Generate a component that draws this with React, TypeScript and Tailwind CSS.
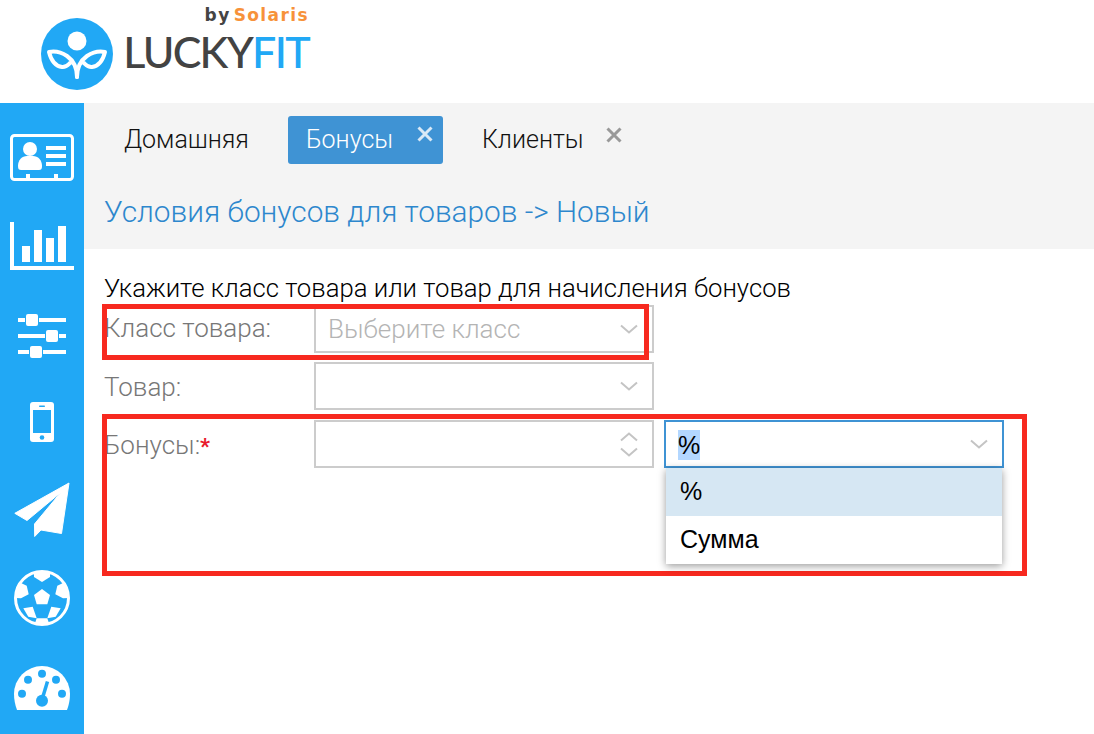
import type { ReactNode } from "react"

function Chevron({ up = false }: { up?: boolean }) {
  return (
    <svg width="18" height="10" viewBox="0 0 18 10" fill="none" className={up ? "rotate-180" : ""}>
      <path d="M1 1.5 9 8.5 17 1.5" stroke="#c4c4c4" strokeWidth="2" />
    </svg>
  )
}

function Close({ color }: { color: string }) {
  return (
    <svg width="16" height="16" viewBox="0 0 16 16" fill="none">
      <path d="M1.5 1.5 14.5 14.5M14.5 1.5 1.5 14.5" stroke={color} strokeWidth="3" />
    </svg>
  )
}

function Logo() {
  return (
    <svg width="72" height="72" viewBox="0 0 72 72" className="shrink-0">
      <circle cx="36" cy="36" r="36" fill="#21a8f5" />
      <circle cx="36" cy="23" r="9.500" fill="#fff" />
      <g fill="none" stroke="#fff" strokeWidth="4" strokeLinecap="round" strokeLinejoin="round">
        <path d="M36 59C36 50 33 43 26 38C20 34 13 33 8 34C10 42 14 48 21 49C25 49.500 27 47 29 45" />
        <path d="M36 59C36 50 39 43 46 38C52 34 59 33 64 34C62 42 58 48 51 49C47 49.500 45 47 43 45" />
      </g>
    </svg>
  )
}

function CardIcon() {
  return (
    <svg width="64" height="47" viewBox="0 0 64 47" fill="#fff">
      <rect x="1.500" y="1.500" width="61" height="44" rx="3" fill="none" stroke="#fff" strokeWidth="3" />
      <circle cx="20" cy="15" r="7" />
      <path d="M8 32C8 26 12 22 17 22H23C28 22 32 26 32 32C32 35 31 36 29 36H11C9 36 8 35 8 32Z" />
      <rect x="36" y="12" width="20" height="4" />
      <rect x="36" y="20" width="20" height="4" />
      <rect x="36" y="28" width="20" height="4" />
      <rect x="16" y="40" width="4" height="5" />
      <rect x="44" y="40" width="4" height="5" />
    </svg>
  )
}

function ChartIcon() {
  return (
    <svg width="64" height="48" viewBox="0 0 64 48" fill="#fff">
      <rect x="0" y="0" width="4" height="48" />
      <rect x="0" y="44" width="64" height="4" />
      <rect x="12" y="24" width="8" height="16" />
      <rect x="24" y="8" width="8" height="32" />
      <rect x="36" y="16" width="8" height="24" />
      <rect x="48" y="4" width="8" height="36" />
    </svg>
  )
}

function SlidersIcon() {
  return (
    <svg width="48" height="44" viewBox="0 0 48 44" fill="#fff">
      <rect x="0" y="4" width="7" height="4" />
      <rect x="21" y="4" width="27" height="4" />
      <rect x="8" y="0" width="12" height="12" rx="2" />
      <rect x="0" y="20" width="27" height="4" />
      <rect x="41" y="20" width="7" height="4" />
      <rect x="28" y="16" width="12" height="12" rx="2" />
      <rect x="0" y="36" width="11" height="4" />
      <rect x="25" y="36" width="23" height="4" />
      <rect x="12" y="32" width="12" height="12" rx="2" />
    </svg>
  )
}

function PhoneIcon() {
  return (
    <svg width="24" height="40" viewBox="0 0 24 40">
      <rect width="24" height="40" rx="3" fill="#fff" />
      <rect x="3" y="8" width="18" height="23" fill="#21a8f5" />
      <rect x="9" y="3.500" width="6" height="1.500" rx="0.700" fill="#21a8f5" />
      <circle cx="12" cy="35.500" r="2.300" fill="#21a8f5" />
    </svg>
  )
}

function PlaneIcon() {
  return (
    <svg width="56" height="56" viewBox="0 0 56 56" fill="#fff" stroke="#fff" strokeWidth="1" strokeLinejoin="round">
      <path d="M55 1 .8 31.300 13 38.500 46.500 10.700 20.500 42 20.700 54.500 27 48 47.500 51.500Z" />
    </svg>
  )
}

function BallIcon() {
  return (
    <svg width="56" height="56" viewBox="0 0 56 56" fill="#fff">
      <defs>
        <clipPath id="ball-clip">
          <circle cx="28" cy="28" r="27" />
        </clipPath>
      </defs>
      <circle cx="28" cy="28" r="26.500" fill="none" stroke="#fff" strokeWidth="3" />
      <path d="M28 19 36 25 33.300 34.300H22.700L20 25Z" />
      <g clipPath="url(#ball-clip)">
        <path d="M20 0H36V7L28 12 20 7Z" />
        <path d="M49 13 43.300 15.700 41.300 24.300 49 28.300 56 28V13Z" />
        <path d="M7 13 12.700 15.700 14.700 24.300 7 28.300 0 28V13Z" />
        <path d="M9.300 38.300 18.700 36.700 22.700 48.300 14.300 46.700Z" />
        <path d="M46.700 38.300 37.300 36.700 33.300 48.300 41.700 46.700Z" />
        <path d="M22.700 48.300H33.300L36 56H20Z" />
      </g>
    </svg>
  )
}

function GaugeIcon() {
  return (
    <svg width="56" height="44" viewBox="0 0 56 44">
      <path d="M3 44C1 39 0 33 0 28A28 28 0 0 1 56 28C56 33 55 39 53 44Z" fill="#fff" />
      <g fill="#21a8f5">
        <circle cx="8" cy="27.700" r="4" />
        <circle cx="14" cy="13.700" r="4" />
        <circle cx="28" cy="7.700" r="4" />
        <circle cx="42" cy="13.700" r="4" />
        <circle cx="48" cy="27.700" r="4" />
        <circle cx="28" cy="34.700" r="6" />
      </g>
      <path d="M28.500 32 33.500 15.500" stroke="#21a8f5" strokeWidth="3.500" />
    </svg>
  )
}

function Field({ children, active = false }: { children?: ReactNode; active?: boolean }) {
  return (
    <div
      className={
        "relative flex h-[48px] w-[340px] items-center justify-between border-2 bg-white pl-[12px] pr-[14px] " +
        (active ? "border-[#3f93d4]" : "border-[#cccccc]")
      }
    >
      {children}
    </div>
  )
}

export default function App() {
  return (
    <div className="flex h-[734px] flex-col overflow-hidden bg-white font-['Roboto',sans-serif] font-light">
      <header className="flex h-[103px] shrink-0 pl-[41px] pt-[18px]">
        <Logo />
        <div className="ml-[13px] -mt-[12px] flex w-[183px] flex-col items-end">
          <div className="flex gap-[3px] font-['DejaVu_Sans',sans-serif] text-[17px] font-bold leading-[18px] tracking-[1.400px] text-[#444]">
            <span>by</span>
            <span className="text-[#f7923a]">Solaris</span>
          </div>
          <div className="mt-[1px] font-['Lato',sans-serif] text-[43px] font-medium leading-[54px] tracking-[-1.700px] text-[#434343]">
            LUCKY<span className="text-[#21a8f5]">FIT</span>
          </div>
        </div>
      </header>

      <div className="relative flex flex-1">
        <aside className="flex w-[84px] shrink-0 flex-col items-center bg-[#21a8f5] pt-[31px]">
          <CardIcon />
          <div className="mt-[41px]"><ChartIcon /></div>
          <div className="mt-[44px]"><SlidersIcon /></div>
          <div className="mt-[44px]"><PhoneIcon /></div>
          <div className="mt-[40px]"><PlaneIcon /></div>
          <div className="mt-[32px]"><BallIcon /></div>
          <div className="mt-[40px]"><GaugeIcon /></div>
        </aside>

        <main className="flex-1">
          <section className="h-[146px] bg-[#f4f4f4] pl-[20px] pt-[13px]">
            <nav className="flex h-[48px] items-center text-[25px]">
              <span className="ml-[20px] text-[#111]">Домашняя</span>
              <div className="relative ml-[39px] flex h-[48px] w-[155px] items-center rounded-[3px] bg-[#3f93d4] pl-[18px] text-white">
                Бонусы
                <div className="absolute left-[129px] top-[10px]"><Close color="#d9e9f6" /></div>
              </div>
              <span className="ml-[39px] text-[#111]">Клиенты</span>
              <div className="ml-[22px] -mt-[10px]"><Close color="#999999" /></div>
            </nav>
            <h1 className="mt-[28px] text-[29.800px] font-light leading-[40px] text-[#2d87cd]">
              Условия бонусов для товаров -&gt; Новый
            </h1>
          </section>

          <section className="relative pl-[20px] pt-[24px] text-[26px] text-[#777]">
            <p className="text-[25.700px] leading-[30px] text-black">Укажите класс товара или товар для начисления бонусов</p>
            <div className="mt-[2px] flex h-[48px]">
              <label className="w-[210px] leading-[46px]">Класс товара:</label>
              <Field>
                <span className="text-[#b4b4b4]">Выберите класс</span>
                <Chevron />
              </Field>
            </div>
            <div className="mt-[9px] flex h-[48px]">
              <label className="w-[210px] leading-[50px]">Товар:</label>
              <Field>
                <span />
                <Chevron />
              </Field>
            </div>
            <div className="mt-[10px] flex h-[48px] gap-[10px]">
              <label className="w-[200px] leading-[50px]">
                Бонусы:<span className="text-[22px] font-bold text-[#e8182a]">*</span>
              </label>
              <Field>
                <span />
                <div className="flex flex-col gap-[5px]">
                  <Chevron up />
                  <Chevron />
                </div>
              </Field>
              <div className="relative">
                <Field active>
                  <span className="mt-[2px] bg-[#b3d7ff] font-['Liberation_Sans',sans-serif] text-[25px] font-normal leading-[30px] text-black">%</span>
                  <Chevron />
                </Field>
                <ul className="absolute left-[2px] top-[48px] z-10 w-[336px] bg-white font-['Liberation_Sans',sans-serif] text-[25px] font-normal text-black shadow-[0_2px_8px_rgba(0,0,0,0.4)]">
                  <li className="flex h-[48px] items-center bg-[#d6e7f3] pl-[14px]">%</li>
                  <li className="flex h-[48px] items-center pl-[14px]">Сумма</li>
                </ul>
              </div>
            </div>
          </section>
        </main>

        {/* red annotation frames drawn on top of the form */}
        <div className="pointer-events-none absolute left-[102px] top-[201px] h-[56px] w-[547px] border-[5px] border-[#f7291f]" />
        <div className="pointer-events-none absolute left-[102px] top-[311px] h-[162px] w-[925px] border-[5px] border-[#f7291f]" />
      </div>
    </div>
  )
}
